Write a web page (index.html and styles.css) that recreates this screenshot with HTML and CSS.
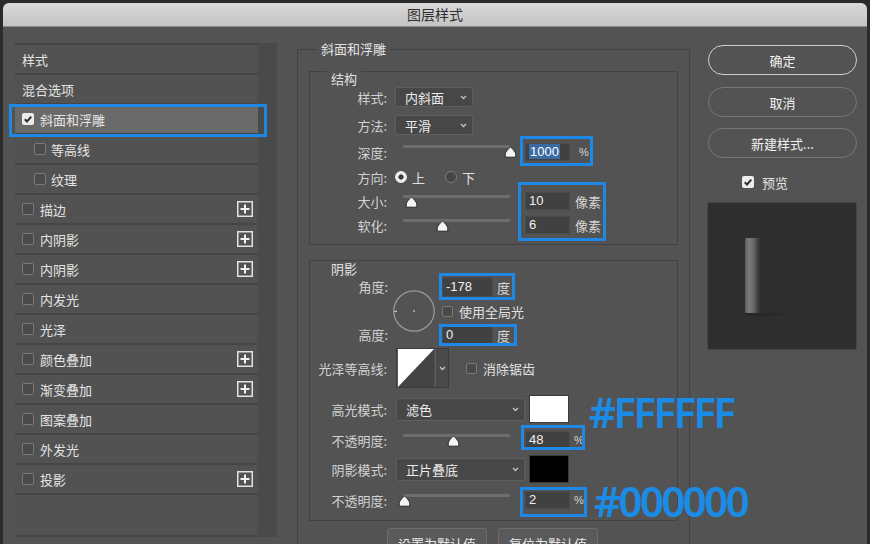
FILE: index.html
```html
<!DOCTYPE html>
<html lang="zh-CN">
<head>
<meta charset="utf-8">
<title>图层样式</title>
<link rel="stylesheet" href="styles.css">
</head>
<body>
<div class="page">
  <div class="window">
    <div class="titlebar">图层样式</div>
    <div class="main">
      <div class="left">
        <div class="list">
          <div class="row">样式</div>
          <div class="row">混合选项</div>
          <div class="row active"><svg class="cbx" viewBox="0 0 12 12"><rect x="0" y="0" width="12" height="12" rx="2" fill="#ececec"/><path d="M2.8 6.2 L5 8.5 L9.3 3.6" fill="none" stroke="#2f2f2f" stroke-width="2"/></svg>斜面和浮雕</div>
          <div class="row sub"><span class="cb"></span>等高线</div>
          <div class="row sub"><span class="cb"></span>纹理</div>
          <div class="row"><span class="cb"></span>描边<svg class="plus" viewBox="0 0 16 16"><rect x="0.75" y="0.75" width="14.5" height="14.5" fill="none" stroke="#e2e2e2" stroke-width="1.5"/><path d="M8 3.5 V12.5 M3.5 8 H12.5" stroke="#f0f0f0" stroke-width="2"/></svg></div>
          <div class="row"><span class="cb"></span>内阴影<svg class="plus" viewBox="0 0 16 16"><rect x="0.75" y="0.75" width="14.5" height="14.5" fill="none" stroke="#e2e2e2" stroke-width="1.5"/><path d="M8 3.5 V12.5 M3.5 8 H12.5" stroke="#f0f0f0" stroke-width="2"/></svg></div>
          <div class="row"><span class="cb"></span>内阴影<svg class="plus" viewBox="0 0 16 16"><rect x="0.75" y="0.75" width="14.5" height="14.5" fill="none" stroke="#e2e2e2" stroke-width="1.5"/><path d="M8 3.5 V12.5 M3.5 8 H12.5" stroke="#f0f0f0" stroke-width="2"/></svg></div>
          <div class="row"><span class="cb"></span>内发光</div>
          <div class="row"><span class="cb"></span>光泽</div>
          <div class="row"><span class="cb"></span>颜色叠加<svg class="plus" viewBox="0 0 16 16"><rect x="0.75" y="0.75" width="14.5" height="14.5" fill="none" stroke="#e2e2e2" stroke-width="1.5"/><path d="M8 3.5 V12.5 M3.5 8 H12.5" stroke="#f0f0f0" stroke-width="2"/></svg></div>
          <div class="row"><span class="cb"></span>渐变叠加<svg class="plus" viewBox="0 0 16 16"><rect x="0.75" y="0.75" width="14.5" height="14.5" fill="none" stroke="#e2e2e2" stroke-width="1.5"/><path d="M8 3.5 V12.5 M3.5 8 H12.5" stroke="#f0f0f0" stroke-width="2"/></svg></div>
          <div class="row"><span class="cb"></span>图案叠加</div>
          <div class="row"><span class="cb"></span>外发光</div>
          <div class="row"><span class="cb"></span>投影<svg class="plus" viewBox="0 0 16 16"><rect x="0.75" y="0.75" width="14.5" height="14.5" fill="none" stroke="#e2e2e2" stroke-width="1.5"/><path d="M8 3.5 V12.5 M3.5 8 H12.5" stroke="#f0f0f0" stroke-width="2"/></svg></div>
          <div class="row fill"></div>
        </div>
        <div class="scroll"></div>
      </div>

      <div class="mid">
        <section class="grp outer">
          <div class="legend lg-outer">斜面和浮雕</div>
          <section class="grp inner struct">
            <div class="legend lg-inner">结构</div>
            <div class="rows">
              <div class="r h20">
                <span class="lab">样式:</span>
                <span class="sel w78">内斜面<svg class="chev" viewBox="0 0 7 5"><path d="M1 1 L3.5 3.5 L6 1" fill="none" stroke="#c4c4c4" stroke-width="1.3"/></svg></span>
              </div>
              <div class="r h20 mt8">
                <span class="lab">方法:</span>
                <span class="sel w78">平滑<svg class="chev" viewBox="0 0 7 5"><path d="M1 1 L3.5 3.5 L6 1" fill="none" stroke="#c4c4c4" stroke-width="1.3"/></svg></span>
              </div>
              <div class="r h20 mt7">
                <span class="lab">深度:</span>
                <span class="slider"><span class="track"><svg class="thumb" style="left:100%" viewBox="0 0 13 12"><path d="M6.5 0.8 C8 2.6 11.8 5.6 11.8 8.4 V11.2 H1.2 V8.4 C1.2 5.6 5 2.6 6.5 0.8 Z" fill="#f4f4f4" stroke="#262626" stroke-width="1"/></svg></span></span>
                <span class="num"><span class="hl">1000</span></span><span class="unit pct wide">%</span>
              </div>
              <div class="r h16 mt7">
                <span class="lab">方向:</span>
                <span class="radio on"></span><span class="rtext">上</span>
                <span class="radio gap"></span><span class="rtext">下</span>
              </div>
              <div class="r h18 mt7">
                <span class="lab">大小:</span>
                <span class="slider"><span class="track"><svg class="thumb" style="left:7.5%" viewBox="0 0 13 12"><path d="M6.5 0.8 C8 2.6 11.8 5.6 11.8 8.4 V11.2 H1.2 V8.4 C1.2 5.6 5 2.6 6.5 0.8 Z" fill="#f4f4f4" stroke="#262626" stroke-width="1"/></svg></span></span>
                <span class="num">10</span><span class="unit">像素</span>
              </div>
              <div class="r h18 mt6">
                <span class="lab">软化:</span>
                <span class="slider"><span class="track"><svg class="thumb" style="left:36.5%" viewBox="0 0 13 12"><path d="M6.5 0.8 C8 2.6 11.8 5.6 11.8 8.4 V11.2 H1.2 V8.4 C1.2 5.6 5 2.6 6.5 0.8 Z" fill="#f4f4f4" stroke="#262626" stroke-width="1"/></svg></span></span>
                <span class="num">6</span><span class="unit">像素</span>
              </div>
            </div>
          </section>

          <section class="grp inner shade">
            <div class="legend lg-inner">阴影</div>
            <div class="rows">
              <div class="angle">
                <div class="alabs"><span class="lab">角度:</span><span class="lab">高度:</span></div>
                <svg class="dial" viewBox="0 0 42 42"><circle cx="21" cy="21" r="20.2" fill="none" stroke="#9c9c9c" stroke-width="1.2"/><circle cx="21" cy="21" r="0.9" fill="#bdbdbd"/><path d="M1.2 21.6 L4 21.4" stroke="#c8c8c8" stroke-width="1.4"/></svg>
                <div class="acol">
                  <div class="ainp"><span class="num w51">-178</span><span class="unit">度</span></div>
                  <div class="chkrow"><span class="cb"></span>使用全局光</div>
                  <div class="ainp"><span class="num w51">0</span><span class="unit">度</span></div>
                </div>
              </div>
              <div class="r h40 mt3">
                <span class="lab">光泽等高线:</span>
                <span class="contour"><svg class="ctr" viewBox="0 0 38 40"><rect width="38" height="40" fill="#444444"/><path d="M0 0 H38 L0 40 Z" fill="#ffffff"/></svg><span class="cdrop"><svg class="chev" viewBox="0 0 7 5"><path d="M1 1 L3.5 3.5 L6 1" fill="none" stroke="#c4c4c4" stroke-width="1.3"/></svg></span></span>
                <span class="chkrow aa"><span class="cb"></span>消除锯齿</span>
              </div>
              <div class="r h28 mt7">
                <span class="lab">高光模式:</span>
                <span class="sel w129">滤色<svg class="chev" viewBox="0 0 7 5"><path d="M1 1 L3.5 3.5 L6 1" fill="none" stroke="#c4c4c4" stroke-width="1.3"/></svg></span>
                <span class="swatch white"></span>
              </div>
              <div class="r h18 mt8">
                <span class="lab">不透明度:</span>
                <span class="slider"><span class="track"><svg class="thumb" style="left:47%" viewBox="0 0 13 12"><path d="M6.5 0.8 C8 2.6 11.8 5.6 11.8 8.4 V11.2 H1.2 V8.4 C1.2 5.6 5 2.6 6.5 0.8 Z" fill="#f4f4f4" stroke="#262626" stroke-width="1"/></svg></span></span>
                <span class="num">48</span><span class="unit pct">%</span>
              </div>
              <div class="r h28 mt6">
                <span class="lab">阴影模式:</span>
                <span class="sel w129">正片叠底<svg class="chev" viewBox="0 0 7 5"><path d="M1 1 L3.5 3.5 L6 1" fill="none" stroke="#c4c4c4" stroke-width="1.3"/></svg></span>
                <span class="swatch black"></span>
              </div>
              <div class="r h18 mt8">
                <span class="lab">不透明度:</span>
                <span class="slider"><span class="track"><svg class="thumb" style="left:1%" viewBox="0 0 13 12"><path d="M6.5 0.8 C8 2.6 11.8 5.6 11.8 8.4 V11.2 H1.2 V8.4 C1.2 5.6 5 2.6 6.5 0.8 Z" fill="#f4f4f4" stroke="#262626" stroke-width="1"/></svg></span></span>
                <span class="num">2</span><span class="unit pct">%</span>
              </div>
            </div>
          </section>

          <div class="defaults">
            <span class="dbtn">设置为默认值</span>
            <span class="dbtn">复位为默认值</span>
          </div>
        </section>
      </div>

      <div class="right">
        <div class="pill primary">确定</div>
        <div class="pill">取消</div>
        <div class="pill">新建样式...</div>
        <div class="pvchk"><svg class="cbx" viewBox="0 0 12 12"><rect x="0" y="0" width="12" height="12" rx="2" fill="#ececec"/><path d="M2.8 6.2 L5 8.5 L9.3 3.6" fill="none" stroke="#2f2f2f" stroke-width="2"/></svg>预览</div>
        <div class="preview"><div class="bar"></div><div class="barshadow"></div></div>
      </div>
    </div>
  </div>

  <div class="mark m-row"></div>
  <div class="mark m-depth"></div>
  <div class="mark m-size"></div>
  <div class="mark m-angle"></div>
  <div class="mark m-alt"></div>
  <div class="mark m-op1"></div>
  <div class="mark m-op2"></div>
  <div class="note n-white">#FFFFFF</div>
  <div class="note n-black">#000000</div>
</div>
</body>
</html>
```

FILE: styles.css
```css
* { box-sizing: border-box; }

body {
  margin: 0;
  background: #2a2a2a;
  font-family: "Noto Sans CJK SC", "Noto Sans", sans-serif;
  font-size: 13px;
  color: #d6d6d6;
}

.page {
  position: relative;
  width: 870px;
  height: 544px;
  overflow: hidden;
  padding: 3px 3px 0 3px;
}

.window {
  width: 864px;
  height: 541px;
  background: #535353;
  border-radius: 6px 6px 0 0;
  overflow: hidden;
}

.titlebar {
  height: 24px;
  background: linear-gradient(#d9d9d9, #c3c3c3);
  border-bottom: 1px solid #8c8c8c;
  text-align: center;
  font-size: 14px;
  line-height: 23px;
  color: #2e2e2e;
}

.main {
  display: flex;
  align-items: flex-start;
  padding-left: 12px;
}

/* left list */
.left {
  margin-top: 16px;
  width: 262px;
  height: 494px;
  display: flex;
  background: #454545;
  flex: none;
}

.list {
  width: 243px;
  display: flex;
  flex-direction: column;
  gap: 2px;
  padding: 2px 0;
}

.row {
  height: 28px;
  flex: none;
  background: #525252;
  display: flex;
  align-items: center;
  padding: 0 5px 0 7px;
  gap: 6px;
  color: #e4e4e4;
}

.row.sub { padding-left: 19px; gap: 5px; }
.row.active { background: #6a6a6a; }
.row.fill { flex: 1; }

.scroll { flex: 1; background: #4a4a4a; }

.cb {
  width: 12px;
  height: 12px;
  flex: none;
  border: 1px solid #7a7a7a;
  border-radius: 2px;
  background: #4a4a4a;
}

.cbx { width: 12px; height: 12px; flex: none; }

.plus { width: 16px; height: 16px; margin-left: auto; flex: none; }

/* middle */
.mid {
  margin-left: 20px;
  margin-top: 22px;
  width: 393px;
  flex: none;
}

.grp {
  border: 1px solid #424242;
}

.legend {
  width: fit-content;
  height: 16px;
  padding: 0 4px;
  line-height: 16px;
  margin-top: -9px;
  background: #535353;
  color: #e2e2e2;
}

.lg-outer { margin-left: 19px; }
.lg-inner { margin-left: 17px; }

.outer { height: 520px; }

.inner { margin: 14px 11px 0 11px; }
.inner.struct { padding: 8px 0 10px; }
.inner.shade { margin-top: 15px; padding: 9px 0 11px; }

.rows { display: flex; flex-direction: column; }

.mt3 { margin-top: 3px; }
.mt6 { margin-top: 6px; }
.mt7 { margin-top: 7px; }
.mt8 { margin-top: 8px; }

.r { display: flex; align-items: center; flex: none; }
.h16 { height: 16px; }
.h18 { height: 18px; }
.h20 { height: 20px; }
.h28 { height: 28px; }
.h40 { height: 40px; }

.lab {
  width: 77px;
  flex: none;
  text-align: right;
  margin-right: 8px;
  color: #d2d2d2;
}

.sel {
  height: 20px;
  flex: none;
  background: #474747;
  border: 1px solid #5e5e5e;
  border-radius: 2px;
  display: flex;
  align-items: center;
  justify-content: space-between;
  padding: 0 5px 0 9px;
  color: #ececec;
}

.w78 { width: 78px; }
.w129 { width: 129px; height: 23px; margin-left: 1px; }

.chev { width: 7px; height: 5px; flex: none; }

.slider {
  width: 123px;
  height: 100%;
  flex: none;
  padding: 3px 8px 0 8px;
}

.track {
  display: block;
  position: relative;
  height: 3px;
  background: #6d6d6d;
  border-radius: 1px;
}

.thumb {
  position: absolute;
  top: 1px;
  width: 13px;
  height: 12px;
  margin-left: -6.5px;
}

.num {
  width: 45px;
  height: 18px;
  flex: none;
  margin-left: 7px;
  background: #414141;
  border: 1px solid #4c4c4c;
  padding-left: 3px;
  font-family: "Liberation Sans", "Noto Sans", sans-serif;
  font-size: 13px;
  line-height: 16px;
  color: #f0f0f0;
}

.hl { background: #3a6ba3; color: #ffffff; padding: 0 1px; }

.unit { margin-left: 5px; color: #d6d6d6; }
.unit.pct {
  font-family: "Liberation Sans", "Noto Sans", sans-serif;
  font-size: 11px;
  margin-left: 4px;
}
.unit.pct.wide { margin-left: 9px; }

.radio {
  width: 12px;
  height: 12px;
  flex: none;
  border-radius: 50%;
  border: 1px solid #7a7a7a;
  background: #454545;
}

.radio.on {
  border-color: #eeeeee;
  background: radial-gradient(circle, #3a3a3a 0 2.3px, #eeeeee 2.9px);
}

.radio.gap { margin-left: 20px; }
.rtext { margin-left: 5px; color: #e0e0e0; }

/* angle block */
.angle { display: flex; align-items: center; height: 68px; flex: none; }

.alabs {
  display: flex;
  flex-direction: column;
  justify-content: space-between;
  height: 68px;
  flex: none;
}

.alabs .lab { line-height: 20px; height: 20px; width: 78px; }

.dial { width: 42px; height: 42px; margin-left: -3px; flex: none; }

.acol {
  margin-left: 7px;
  display: flex;
  flex-direction: column;
  gap: 6px;
}

.ainp { display: flex; align-items: center; height: 20px; }
.ainp .num { margin-left: 0; height: 20px; line-height: 18px; }
.ainp .unit { margin-left: 4px; }
.num.w51 { width: 51px; }

.chkrow {
  display: flex;
  align-items: center;
  gap: 6px;
  height: 16px;
  color: #e0e0e0;
}

.chkrow .cb { width: 11px; height: 11px; }
.chkrow.aa { margin-left: 17px; }

.contour {
  display: flex;
  height: 40px;
  flex: none;
  margin-left: 1px;
  border: 1px solid #3c3c3c;
}

.ctr { width: 38px; height: 38px; display: block; }

.cdrop {
  width: 13px;
  background: #4a4a4a;
  border-left: 1px solid #5d5d5d;
  display: flex;
  align-items: center;
  justify-content: center;
}

.swatch {
  width: 40px;
  height: 28px;
  margin-left: 4px;
  flex: none;
  border: 1px solid #3a3a3a;
}

.swatch.white { background: #ffffff; }
.swatch.black { background: #000000; }

.defaults {
  display: flex;
  gap: 11px;
  margin: 7px 0 0 89px;
}

.dbtn {
  width: 100px;
  height: 26px;
  background: #5a5a5a;
  border: 1px solid #6c6c6c;
  border-radius: 3px;
  text-align: center;
  line-height: 30px;
  color: #eaeaea;
}

/* right column */
.right {
  margin-left: 17px;
  margin-top: 18px;
  width: 151px;
  flex: none;
  display: flex;
  flex-direction: column;
}

.pill {
  margin-left: 1px;
  width: 149px;
  height: 30px;
  border: 1.5px solid #777777;
  border-radius: 15px;
  display: flex;
  align-items: center;
  justify-content: center;
  color: #f2f2f2;
}

.pill.primary { border-color: #d0d0d0; }
.pill + .pill { margin-top: 12px; }
.pill + .pill + .pill { margin-top: 11px; }

.pvchk {
  margin-top: 16px;
  height: 16px;
  display: flex;
  align-items: center;
  gap: 8px;
  padding-left: 35px;
  color: #e4e4e4;
}

.preview {
  margin-top: 12px;
  width: 150px;
  height: 148px;
  background: #2e2e2e;
  border: 1px solid #454545;
  padding: 35px 0 0 37px;
}

.bar {
  width: 16px;
  height: 75px;
  background: linear-gradient(90deg, #5a5a5a 0%, #7c7c7c 25%, #666666 55%, #3a3a3a 85%, #2e2e2e 100%);
  border-radius: 1px;
}

.barshadow {
  width: 55px;
  height: 3px;
  background: linear-gradient(90deg, #262626, #2e2e2e);
}

/* annotation overlays */
.mark {
  position: absolute;
  border: 3px solid #1e88e5;
}

.m-row { left: 9px; top: 104px; width: 258px; height: 33px; }
.m-depth { left: 520px; top: 136px; width: 73px; height: 30px; }
.m-size { left: 518px; top: 182px; width: 88px; height: 59px; }
.m-angle { left: 439px; top: 273px; width: 76px; height: 27px; }
.m-alt { left: 439px; top: 324px; width: 78px; height: 22px; }
.m-op1 { left: 521px; top: 425px; width: 64px; height: 25px; }
.m-op2 { left: 520px; top: 487px; width: 67px; height: 30px; }

.note {
  position: absolute;
  font-family: "Noto Sans", sans-serif;
  font-weight: 600;
  font-size: 42px;
  line-height: 42px;
  letter-spacing: -2.6px;
  color: #1b8ce6;
  white-space: nowrap;
}

.n-white { left: 589px; top: 391px; }
.n-black { left: 594px; top: 480px; }
```
